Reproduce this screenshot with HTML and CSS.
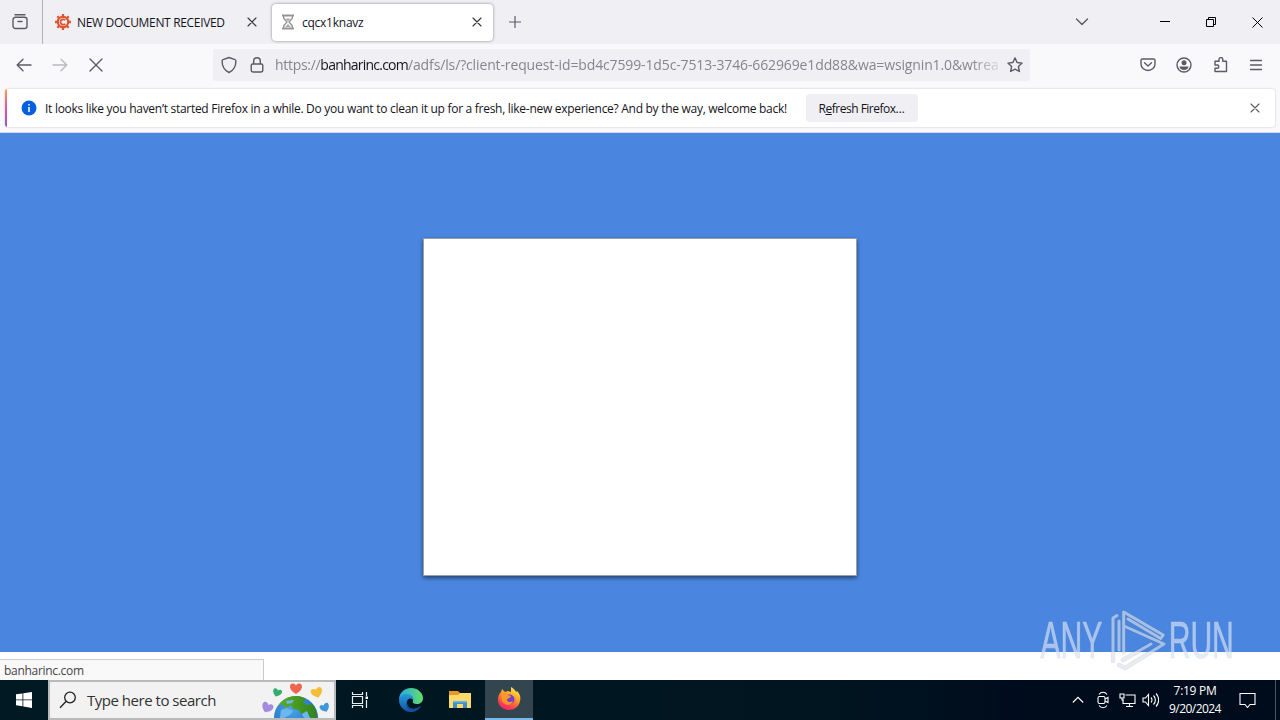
FILE: index.html
```html
<!DOCTYPE html>
<html lang="en">
<head>
<meta charset="utf-8">
<title>cqcx1knavz</title>
<link rel="stylesheet" href="styles.css">
</head>
<body>
<div class="screen">
  <header class="tabbar">
    <div class="history"><svg class="icon" width="18" height="18" viewBox="0 0 18 18"><path d="M4 1.800h10M4.500 4.300h9a2.500 2.500 0 0 1 2.500 2.500v6.200a2.500 2.500 0 0 1-2.500 2.500h-9A2.500 2.500 0 0 1 2 13V6.800a2.500 2.500 0 0 1 2.500-2.500zM7 8.500h4"/></svg></div>
    <div class="tab">
      <svg width="16" height="16" viewBox="0 0 16 16" fill="none" stroke="#dc5430"><circle cx="8" cy="8" r="5.200" stroke-width="2.200"/><path d="M8 0v3M8 13v3M0 8h3M13 8h3M2.300 2.300l2 2M11.700 11.700l2 2M13.700 2.300l-2 2M2.300 13.700l2-2" stroke-width="2.300"/><path d="M10.300 6.300a2.700 2.700 0 1 0 0 3.400" stroke-width="1.800"/></svg>
      <span class="tab-label first-label">NEW DOCUMENT RECEIVED</span>
      <svg class="icon close" width="10" height="10" viewBox="0 0 10 10"><path d="M1 1l8 8M9 1l-8 8"/></svg>
    </div>
    <div class="tab active">
      <svg width="14" height="16" viewBox="0 0 14 16" fill="none" stroke="#969696"><path d="M1 1.500h12M1 14.500h12" stroke-width="1.800"/><path d="M2.700 2v2.200L6 8l-3.300 3.800V14M11.300 2v2.200L8 8l3.300 3.800V14" stroke-width="1.400"/><path d="M4.500 4.500h5L7 7.200zM4 13l3-3 3 3z" fill="#aaa" stroke="none"/></svg>
      <span class="tab-label">cqcx1knavz</span>
      <svg class="icon close" width="10" height="10" viewBox="0 0 10 10"><path d="M1 1l8 8M9 1l-8 8"/></svg>
    </div>
    <svg class="icon newtab" width="12" height="12" viewBox="0 0 12 12"><path d="M6 .5v11M.5 6h11"/></svg>
    <div class="window-tools">
      <svg class="icon" width="14" height="10" viewBox="0 0 14 10"><path d="M1.500 2L7 7.500 12.500 2"/></svg>
      <svg class="sys" width="10" height="10" viewBox="0 0 10 10"><path d="M0 4.500h10"/></svg>
      <svg class="sys" width="10" height="10" viewBox="0 0 10 10"><path d="M.5 2.500h7v7h-7zM2.500 2.500v-2h7v7h-2"/></svg>
      <svg class="sys" width="11" height="11" viewBox="0 0 11 11"><path d="M.5.5l10 10M10.500.5l-10 10"/></svg>
    </div>
  </header>

  <nav class="toolbar">
    <div class="nav-buttons">
      <svg class="icon" width="16" height="14" viewBox="0 0 16 14"><path d="M15 7H1.500M7 1.200L1.200 7 7 12.800"/></svg>
      <svg class="icon disabled" width="16" height="14" viewBox="0 0 16 14"><path d="M1 7h13.500M9 1.200L14.800 7 9 12.800"/></svg>
      <svg class="icon" width="14" height="14" viewBox="0 0 14 14"><path d="M1 1l12 12M13 1L1 13"/></svg>
    </div>
    <div class="urlbar">
      <svg class="icon" width="16" height="18" viewBox="0 0 16 18"><path d="M8 1.500l6 2.200c.7.200.9.700.9 1.300 0 5-2 9.200-6.900 11.500C3.100 14.200 1.100 10 1.100 5c0-.6.2-1.100.9-1.300z"/></svg>
      <svg class="icon lock" width="14" height="18" viewBox="0 0 14 18"><path d="M3.700 8V5a3.300 3.300 0 0 1 6.600 0v3M2.600 8h8.800a1.400 1.400 0 0 1 1.400 1.400v4.700a1.900 1.900 0 0 1-1.900 1.900H3.100a1.900 1.900 0 0 1-1.900-1.900V9.400A1.400 1.400 0 0 1 2.600 8z"/></svg>
      <div class="url"><span class="scheme">https://</span><span class="host">banharinc.com</span><span class="path">/adfs/ls/?client-request-id=bd4c7599-1d5c-7513-3746-662969e1dd88&amp;wa=wsignin1.0&amp;wtrea</span></div>
      <svg class="icon" width="16" height="16" viewBox="0 0 16 16"><path d="M8 .9l2.100 4.600 5 .6-3.700 3.400 1 5L8 12.100l-4.400 2.400 1-5L.9 6.100l5-.6z"/></svg>
    </div>
    <div class="tool-buttons">
      <svg class="icon" width="16" height="16" viewBox="0 0 16 16"><path d="M2.500 2h11a1.500 1.500 0 0 1 1.500 1.500V7a7 6.500 0 0 1-14 0V3.500A1.500 1.500 0 0 1 2.500 2zM4.500 5.700L8 9l3.500-3.300"/></svg>
      <svg class="icon" width="16" height="16" viewBox="0 0 16 16"><circle cx="8" cy="8" r="7"/><circle cx="8" cy="5.700" r="2.500" fill="#5b5b66" stroke="none"/><path d="M3.500 9.500h9c0 2-2 3.500-4.500 3.500s-4.500-1.500-4.500-3.500z" fill="#5b5b66" stroke="none"/></svg>
      <svg class="icon" width="16" height="16" viewBox="0 0 16 16"><path d="M2 6.800V4.200h4V2.500a1.900 1.900 0 0 1 3.800 0v1.700H13.500V14.500H2v-3.200h2.200a1.600 1.600 0 0 0 0-3.300H2z"/></svg>
      <svg class="icon" width="12" height="12" viewBox="0 0 12 12"><path d="M.5 1.500h11M.5 6h11M.5 10.500h11"/></svg>
    </div>
  </nav>

  <div class="notice-area">
    <div class="notice">
      <svg class="info" width="16" height="16" viewBox="0 0 16 16"><circle cx="8" cy="8" r="7.500" fill="#0560df"/><path d="M8 7v5M8 4v1.500" stroke="#fff" stroke-width="1.500"/></svg>
      <span class="message">It looks like you haven’t started Firefox in a while. Do you want to clean it up for a fresh, like-new experience? And by the way, welcome back!</span>
      <button class="refresh">R<u>e</u>fresh Firefox…</button>
      <svg class="icon dismiss" width="10" height="10" viewBox="0 0 10 10"><path d="M1 1l8 8M9 1L1 9"/></svg>
    </div>
  </div>

  <main class="page">
    <div class="card"></div>
  </main>

  <div class="page-foot">
    <div class="status"><span>banharinc.com</span></div>
  </div>

  <div class="watermark">
    <span class="mark-text">ANY</span>
    <svg width="58" height="66" viewBox="75 4 58 66">
      <defs><path id="mark" d="M78 57V14l4-2.500M84 46V17M88.700 48V8l39.500 23-2.500 3.500L93 15M89 22l40 18-39 24-6-3M88 56l28-16"/></defs>
      <g fill="none" stroke-linejoin="round" stroke-linecap="round">
        <use href="#mark" class="mark-edge"/>
        <use href="#mark" class="mark-line"/>
      </g>
    </svg>
    <span class="mark-text">RUN</span>
  </div>

  <footer class="taskbar">
    <div class="start"><svg width="16" height="16" viewBox="0 0 16 16" fill="#fff"><path d="M0 2.300l6.500-.9v6H0zM7.300 1.300L16 0v7.400H7.300zM0 8.200h6.500v6L0 13.300zM7.300 8.200H16V16l-8.700-1.500z"/></svg></div>
    <div class="search">
      <svg width="18" height="18" viewBox="0 0 18 18" fill="none" stroke="#222" stroke-width="1.300"><circle cx="11" cy="6.500" r="5.300"/><path d="M7.200 10.300L1 16.700"/></svg>
      <span class="search-label">Type here to search</span>
      <svg class="earth" width="72" height="36" viewBox="0 0 72 36">
        <defs><radialGradient id="sea" cx=".4" cy=".3" r=".7"><stop offset="0" stop-color="#4aa5e8"/><stop offset="1" stop-color="#1d63bb"/></radialGradient>
        <linearGradient id="land"><stop stop-color="#60ae25"/><stop offset="1" stop-color="#30821e"/></linearGradient>
        <path id="heart" d="M0 5C-3 3-6 1-6-2.500-6-6-2-6.500 0-3.500 2-6.500 6-6 6-2.500 6 1 3 3 0 5z"/></defs>
        <circle cx="36" cy="36" r="22" fill="url(#sea)"/>
        <path d="M18 24c4-6 10-10 18-10 5 0 8 2 10 3l-3 3 4 3 5-1c3 3 5 7 5 14h-6l-4-5-6 1-2-4-6-1-2-4-5 3-4-4z" fill="url(#land)"/>
        <path d="M21 28l6-2 6 3-3 4-6 3h-4zM26 19l8-1-2 3-5 1zM42 32l5-3 3 7h-6z" fill="#6cb8ec"/>
        <use href="#heart" transform="translate(36 7)" fill="#ed6650"/>
        <use href="#heart" transform="translate(17 11) rotate(20) scale(.75)" fill="#32ae6c"/>
        <use href="#heart" transform="translate(57 11) rotate(-18) scale(.95)" fill="#f5bd31"/>
        <use href="#heart" transform="translate(7 26) rotate(25) scale(.95)" fill="#a58add"/>
        <use href="#heart" transform="translate(65 26) rotate(-25) scale(.8)" fill="#3f98dc"/>
      </svg>
    </div>
    <div class="app"><svg width="18" height="18" viewBox="0 0 18 18" fill="none" stroke="#e8edf0" stroke-width="1.200"><path d="M1.500 1v2.500h10V1M1.500 5.500h10v7h-10zM1.500 17v-2.500h10V17M15.500 1v4M15.500 9v8"/><path d="M14.500 5.500h2.500v2.500h-2.500z" fill="#fff" stroke="none"/></svg></div>
    <div class="app edge"><svg width="24" height="24" viewBox="0 0 24 24">
      <defs><linearGradient id="e1"><stop stop-color="#25a9e6"/><stop offset="1" stop-color="#64de65"/></linearGradient><linearGradient id="e2" x2="0" y2="1"><stop stop-color="#229ce1"/><stop offset="1" stop-color="#1551a2"/></linearGradient></defs>
      <path d="M0 12C0 5 5 0 12 0c7 0 12 5 12 10 0 4-3 6-6 6-3 0-5-1-4-3 1-4-2-6-6-6C4 7 1 9 0 12z" fill="url(#e1)"/>
      <path d="M0 12C1 8 4 6 8 6c4 0 7 3 6 6-4-4-8 1-5 6 2 4 8 4 13 0-3 5-7 6-10 6C5 24 0 18 0 12z" fill="url(#e2)"/>
      <path d="M8.500 12c-2.500 7 4 12 13.500 6-3 4-6 5-8 5-5 0-9-5-5.500-11z" fill="#104d98"/></svg></div>
    <div class="app files"><svg width="22" height="20" viewBox="0 0 22 20"><path d="M0 1h9l2 2h10v4H0z" fill="#e59b23"/><path d="M0 5h9l2-2h11v15H0z" fill="#ffd969"/><path d="M4 18v-7h14v7h-4v-4H8v4z" fill="#3d8fd1"/><path d="M4 11h14v1.500H4z" fill="#67b4e8"/></svg></div>
    <div class="app running"><svg width="24" height="24" viewBox="0 0 24 24">
      <defs><linearGradient id="fx" x1=".8" y1="0" x2=".3" y2="1"><stop stop-color="#fff14b"/><stop offset=".45" stop-color="#ff9826"/><stop offset=".8" stop-color="#ff3f4d"/><stop offset="1" stop-color="#e52478"/></linearGradient></defs>
      <path d="M1 13c0-4 1-6 3-8l1-3 3 3 3-1 3 1V0c4 2 5 5 5 5l1-1c3 3 4 6 3 10-1 6-6 9-11 9C6 23 1 19 1 13z" fill="url(#fx)"/><circle cx="12.500" cy="12.500" r="5" fill="#7540ce"/><path d="M4 8c2-3 5-2 7 0l3 1c-1 3-4 2-4 4 1 3 4 2 6 1-1 5-9 5-11 0z" fill="#ff9629"/></svg></div>
    <div class="tray">
      <svg width="12" height="8" viewBox="0 0 12 8"><path d="M.8 6.500L6 1.300l5.200 5.200"/></svg>
      <svg width="12" height="18" viewBox="0 0 12 18"><rect x="1" y="5.500" width="7" height="7" rx="1.500"/><path d="M8 8l3-1.500v5L8 10M2 3.500c2-3 6-3 8 0M2 14.500c2 3 6 3 8 0"/></svg>
      <svg width="17" height="16" viewBox="0 0 17 16"><path d="M6.500 3h9.500v8.500H4V8M10.500 11.500v3M7 14.500h7M1 2h4v4H1zM3 6v2h2"/></svg>
      <svg width="17" height="16" viewBox="0 0 17 16"><path d="M1 6h2.500l3-3.500v11L3.500 10H1zM9 5.500c1.300 1.300 1.300 3.700 0 5M11.500 3.500c2.500 2.500 2.500 6.500 0 9M14 1.500c3.500 3.500 3.500 9.500 0 13"/></svg>
    </div>
    <div class="clock"><span class="time">7:19 PM</span><span class="date">9/20/2024</span></div>
    <svg class="action" width="17" height="16" viewBox="0 0 17 16"><path d="M1 1.500h15v11h-5l-2.500 3-2.500-3H1z"/></svg>
    <div class="show-desktop"></div>
  </footer>
</div>
</body>
</html>
```
FILE: styles.css
```css
* { box-sizing: border-box; }
body { margin: 0; font-family: "Open Sans", "Noto Sans", sans-serif; font-size: 12px; color: #15141a; }
svg { display: block; flex: none; }
span { white-space: nowrap; }
.screen { position: relative; width: 1280px; height: 720px; overflow: hidden; display: flex; flex-direction: column; background: #fff; }
.icon { fill: none; stroke: #5b5b66; stroke-width: 1.4; stroke-linecap: round; stroke-linejoin: round; }
.tabbar { height: 44px; flex: none; display: flex; align-items: center; background: #f0f0f4; }
.history { width: 43px; height: 44px; padding-left: 11px; border-right: 1px solid #b1b1b8; display: flex; align-items: center; }
.tab { width: 224px; height: 37px; padding: 0 10px 0 12px; display: flex; align-items: center; gap: 6px; }
.tab.active { width: 221px; margin-left: 5px; padding: 0 11px 0 9px; gap: 7px; background: #fff; border-radius: 4px; box-shadow: 0 0 3px rgba(0, 0, 0, .45); }
.tab-label { letter-spacing: -.25px; }
.first-label { letter-spacing: -.33px; }
.close { margin-left: auto; stroke: #333339; stroke-width: 1.1; }
.newtab { margin-left: 16px; stroke-width: 1.2; }
.window-tools { margin-left: auto; padding-right: 17px; display: grid; grid-template-columns: 85px 46px 46px 11px; align-items: center; }
.sys { fill: none; stroke: #000; stroke-width: 1; }
.toolbar { height: 44px; flex: none; display: flex; align-items: center; background: #f9f9fb; }
.nav-buttons { width: 213px; padding-left: 16px; display: grid; grid-template-columns: 36px 37px 14px; align-items: center; }
.nav-buttons, .tool-buttons { margin-top: -2px; }
.disabled { opacity: .4; }
.urlbar { width: 817px; height: 32px; margin-top: -3px; padding: 0 7px 0 8px; display: flex; align-items: center; background: #f0f0f4; border-radius: 3px; }
.lock { margin-left: 13px; }
.url { width: 724px; margin: 0 8px 0 11px; overflow: hidden; white-space: nowrap; display: flex; font-size: 14px; line-height: 24px; color: #85858d; mask-image: linear-gradient(to right, #000 96%, transparent 101%); }
.scheme { letter-spacing: -.3px; }
.host { color: #15141a; letter-spacing: -.77px; }
.path { letter-spacing: -.13px; }
.tool-buttons { margin-left: 110px; display: grid; grid-template-columns: 36px 37px 37px 12px; align-items: center; }
.notice-area { height: 45px; flex: none; padding: 1px 5px 4px 5px; background: #f9f9fb; border-bottom: 1px solid #cbdcf3; }
.notice { height: 38px; display: flex; align-items: center; padding: 0 15px 0 14px; background: linear-gradient(#ff9a55, #e6529e, #9059d0) left / 2px 100% no-repeat #fff; border-radius: 3px; box-shadow: 0 0 2px rgba(0, 0, 0, .25); }
.info { margin-left: 2px; }
.message { width: 743px; margin-left: 8px; letter-spacing: -.283px; }
.refresh { width: 112px; height: 28px; margin-left: 18px; padding: 0 1px 0 0; border: 0; border-radius: 4px; background: #f0f0f4; font: inherit; letter-spacing: -.5px; color: inherit; }
.dismiss { margin-left: auto; stroke-width: 1.1; }
.page { height: 519px; flex: none; display: flex; justify-content: center; padding-top: 105px; background: #4a86df; }
.card { width: 434px; height: 338px; background: #fff; border: 1px solid #999fa9; box-shadow: 0 2px 4px rgba(0, 0, 0, .5); }
.page-foot { height: 28px; flex: none; display: flex; align-items: flex-end; background: #fff; }
.status { width: 264px; height: 21px; padding: 1px 4px 0; display: flex; align-items: center; background: #f9f9fa; border: 1px solid #ccc; border-width: 1px 1px 0 0; color: #444; letter-spacing: -.3px; }
.watermark { position: absolute; left: 1032px; top: 608px; width: 202px; height: 66px; display: grid; grid-template-columns: 78px 58px 66px; align-items: center; justify-items: center; }
.mark-edge { stroke: rgba(110, 120, 140, .2); stroke-width: 4.5; }
.mark-line { stroke: rgba(235, 242, 252, .55); stroke-width: 3; }
.mark-text { font: 51px/66px "Liberation Sans", sans-serif; color: rgba(215, 225, 241, .68); -webkit-text-stroke: 1.2px rgba(205, 218, 238, .35); transform: scaleX(.59); }
.taskbar { height: 40px; flex: none; display: flex; align-items: center; background: linear-gradient(to right, #001923, #001520 65%, #000b1c 80%); }
.start { width: 48px; display: flex; justify-content: center; }
.search { width: 288px; height: 40px; padding: 0 2px 0 9px; display: flex; align-items: center; background: #f2f2f2; border: 2px solid #b8babb; }
.search-label { margin-left: 10px; font-size: 15px; letter-spacing: -.48px; color: #333; }
.earth { margin-left: auto; }
.app { width: 48px; height: 40px; display: flex; align-items: center; justify-content: center; }
.edge { width: 53px; padding-left: 1px; }
.files { padding-right: 2px; }
.running { background: #33454e; border-bottom: 2px solid #76b9ed; }
.tray { margin-left: auto; display: grid; grid-template-columns: 25px 22px 23px 17px; align-items: center; }
.tray svg, .action { fill: none; stroke: #fff; stroke-width: 1.1; }
.clock { width: 54px; margin-left: 9px; display: flex; flex-direction: column; align-items: center; color: #fff; line-height: 18px; }
.time { letter-spacing: -.3px; }
.date { letter-spacing: -.55px; }
.action { margin-left: 17px; }
.show-desktop { width: 1px; height: 40px; margin: 0 4px 0 19px; background: #4b5360; }
```
